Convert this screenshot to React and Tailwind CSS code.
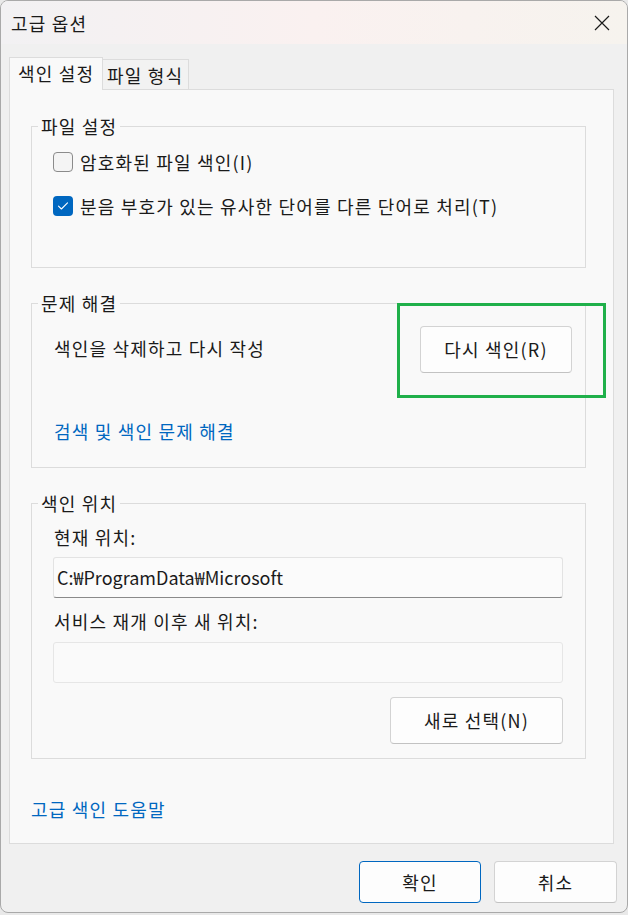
import { useState } from 'react';

const FONT = { fontFamily: '"Noto Sans CJK KR", "Noto Sans", sans-serif' };

function Checkbox({ checked, onChange, label }) {
  return (
    <label className="flex items-center gap-[7px] h-[24px] cursor-default select-none" onClick={onChange}>
      {checked ? (
        <span className="w-[20px] h-[20px] shrink-0 rounded-[4px] bg-[#0067c0] flex items-center justify-center">
          <svg width="12" height="10" viewBox="0 0 12 10" fill="none">
            <path d="M1.5 5.2 L4.4 8 L10.5 1.8" stroke="white" strokeWidth="1.1" strokeLinecap="round" strokeLinejoin="round" />
          </svg>
        </span>
      ) : (
        <span className="w-[20px] h-[20px] shrink-0 rounded-[4px] border border-[#8b8b8b] bg-[#f4f4f4]" />
      )}
      <span className="whitespace-nowrap">{label}</span>
    </label>
  );
}

function Group({ title, className, children }) {
  return (
    <div className={`relative border border-[#dcdcdc] ${className}`}>
      <span className="absolute -top-[13px] left-[6px] px-[3px] bg-[#f9f9f9] leading-[24px]">{title}</span>
      {children}
    </div>
  );
}

function Button({ children, className = '', primary }) {
  return (
    <button
      className={`flex items-center justify-center rounded-[4px] bg-[#fdfdfd] border ${primary ? 'border-[#0067c0]' : 'border-[#d3d3d3] border-b-[#c2c2c2]'} ${className}`}
    >
      {children}
    </button>
  );
}

export default function App() {
  const [encrypted, setEncrypted] = useState(false);
  const [diacritics, setDiacritics] = useState(true);

  return (
    <div className="w-[628px] h-[915px] bg-[#e9e9e9] text-[18px] tracking-[1.2px] text-[#1a1a1a]" style={FONT}>
      <div className="w-[628px] h-[913px] rounded-[8px] border border-[#a9a9a9] bg-[#f0f0f0] overflow-hidden flex flex-col">
        {/* Title bar */}
        <div className="h-[43px] shrink-0 flex items-center justify-between pl-[10px] pr-[17px] bg-gradient-to-r from-[#f2f1f3] via-[#faf1f0] to-[#f6f3ee]">
          <span className="leading-[24px]">고급 옵션</span>
          <svg width="16" height="16" viewBox="0 0 16 16">
            <path d="M1 1 L15 15 M15 1 L1 15" stroke="#1a1a1a" strokeWidth="1.2" />
          </svg>
        </div>

        {/* Tabs */}
        <div className="flex items-end ml-[8px] mt-[13px] relative z-10 -mb-px">
          <div className="w-[94px] h-[33px] bg-[#f9f9f9] border border-b-0 border-[#dcdcdc] pl-[8px] pt-[3px] leading-[24px] whitespace-nowrap">색인 설정</div>
          <div className="w-[86px] h-[30px] mb-px bg-[#f2f2f2] border border-l-0 border-b-0 border-[#dcdcdc] pl-[4px] pt-[3px] leading-[24px] whitespace-nowrap">파일 형식</div>
        </div>

        {/* Panel */}
        <div className="ml-[8px] w-[605px] h-[755px] shrink-0 bg-[#f9f9f9] border border-[#dcdcdc] pl-[21px] pr-[27px] pt-[36px]">
          <Group title="파일 설정" className="h-[142px] pl-[21px] pt-[23px]">
            <div className="flex flex-col gap-[20px]">
              <Checkbox checked={encrypted} onChange={() => setEncrypted(!encrypted)} label="암호화된 파일 색인(I)" />
              <Checkbox checked={diacritics} onChange={() => setDiacritics(!diacritics)} label="분음 부호가 있는 유사한 단어를 다른 단어로 처리(T)" />
            </div>
          </Group>

          <Group title="문제 해결" className="mt-[35px] h-[165px] pl-[22px] pr-[13px] pt-[22px]">
            <div className="flex items-center justify-between">
              <span className="leading-[24px] -mt-[3px]">색인을 삭제하고 다시 작성</span>
              <Button className="w-[152px] h-[47px]">다시 색인(R)</Button>
            </div>
            <div className="mt-[46px] leading-[24px] text-[#0067c0]">검색 및 색인 문제 해결</div>
            <div className="absolute left-[365px] -top-px w-[209px] h-[95px] border-[3px] border-[#1fb04a]" />
          </Group>

          <Group title="색인 위치" className="mt-[35px] h-[256px] pl-[21px] pr-[22px] pt-[21px]">
            <div className="pl-px leading-[24px]">현재 위치:</div>
            <div className="mt-[8px] h-[41px] rounded-[3px] border border-[#e3e3e3] border-b-[#8a8a8a] bg-[#fbfbfb] flex items-center pl-[3px] tracking-normal">
              C:₩ProgramData₩Microsoft
            </div>
            <div className="mt-[11px] pl-px leading-[24px]">서비스 재개 이후 새 위치:</div>
            <div className="mt-[9px] h-[41px] rounded-[3px] border border-[#e6e6e6] bg-[#fafafa]" />
            <div className="mt-[14px] flex justify-end">
              <Button className="w-[173px] h-[47px]">새로 선택(N)</Button>
            </div>
          </Group>

          <div className="mt-[38px] leading-[24px] text-[#0067c0]">고급 색인 도움말</div>
        </div>

        {/* Bottom buttons */}
        <div className="mt-[17px] flex justify-end gap-[13px] pr-[10px]">
          <Button primary className="w-[122px] h-[42px]">확인</Button>
          <Button className="w-[123px] h-[42px]">취소</Button>
        </div>
      </div>
    </div>
  );
}
